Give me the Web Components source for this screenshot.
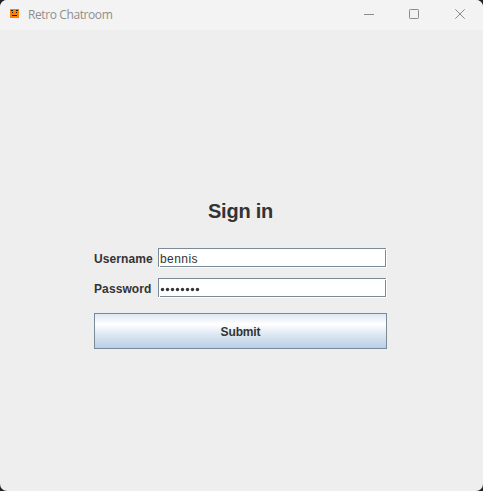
<!DOCTYPE html>
<html lang="en">
<head>
<meta charset="utf-8">
<title>Retro Chatroom</title>
<style>
html,body{margin:0;height:100%;overflow:hidden;background:#202226}
body{font-family:"Liberation Sans",Arial,sans-serif}
</style>
</head>
<body>
<app-window caption="Retro Chatroom">
  <sign-in-form></sign-in-form>
</app-window>
<script>
const define = (name, html) => customElements.define(name, class extends HTMLElement {
  constructor() {
    super();
    this.attachShadow({mode: 'open'}).innerHTML =
      html.replace(/\{(\w+)\}/g, (_, key) => this.getAttribute(key) || '');
  }
});

define('app-icon', `<style>:host{display:block;width:9px;height:9px}svg{display:block}</style>
<svg width="9" height="9" shape-rendering="crispEdges"><path fill="#ff8000" d="M0 0h9v9H0z"/>
<path fill="#1c1712" d="M1 1h2v1H1zM6 1h2v1H6zM2 3h1v1H2zM6 3h1v1H6zM2 6h5v1H2z"/></svg>`);

define('window-controls', `<style>
:host{display:flex;height:29px}
span{width:46px;display:flex}
svg{display:block;width:46px;height:29px;fill:none;stroke:#8b8b8b;stroke-width:1}
</style>
<span><svg><path d="M19 14.5h10"/></svg></span>
<span><svg><rect x="18.5" y="9.5" width="9" height="9" rx=".8"/></svg></span>
<span><svg><path d="M18.3 9.3l9.4 9.4M27.7 9.3l-9.4 9.4"/></svg></span>`);

define('title-bar', `<style>
:host{display:flex;height:30px;background:#f3f3f3;color:#8f8f8f;font:12px/30px "Open Sans","Noto Sans",sans-serif}
app-icon{margin:9px 9px 0 10px}
.caption{flex:1;white-space:nowrap;letter-spacing:-.4px}
</style><app-icon></app-icon><span class="caption"><slot></slot></span><window-controls></window-controls>`);

define('app-window', `<style>
:host{display:flex;flex-direction:column;width:483px;height:491px;background:#eee;border-radius:7px;overflow:hidden}
main{flex:1;display:flex;flex-direction:column;align-items:flex-start}
</style><title-bar>{caption}</title-bar><main><slot></slot></main>`);

define('text-field', `<style>
:host{display:grid;grid-template-columns:64px 229px;height:20px;align-items:start;color:#333}
b{font-size:12px;line-height:20px;padding-top:1px;letter-spacing:.1px}
.box{box-sizing:border-box;height:20px;border:solid #fff;border-width:0 1px 1px 0;
background:linear-gradient(#eee,#eee) 100% 0/1px 1px no-repeat border-box,#fff}
.edge{position:relative;box-sizing:border-box;height:19px;border:1px solid #7a8a99;padding-left:1px;font-size:12px;line-height:19px;letter-spacing:.45px;color:#333;display:flex}
.edge::before,.edge::after{content:"";position:absolute;width:1px;height:1px;background:#fff}
.edge::before{left:0;bottom:-1px}
.edge::after{right:-1px;top:0}
.value{display:block;padding-top:1px;white-space:nowrap}
</style><b>{label}</b><div class="box"><div class="edge"><span class="value"><slot></slot></span></div></div>`);

define('password-dots', `<style>:host{display:block}svg{display:block}</style>
<svg width="44" height="16" fill="#333">${Array.from({length: 8}, (_, i) => `<circle cx="${2.5 + i * 5}" cy="9.5" r="1.7"/>`).join('')}</svg>`);

define('submit-button', `<style>
:host{display:block}
button{display:block;box-sizing:border-box;width:293px;height:36px;padding:2px 0 0;margin:0;border:1px solid #7a8a99;border-radius:0;
background:linear-gradient(#dde8f3 0%,#fff 30%,#dde8f3 60%,#b8cfe5 100%);font:bold 12px/32px "Liberation Sans",Arial,sans-serif;letter-spacing:-.15px;color:#333}
</style><button><slot></slot></button>`);

define('sign-in-form', `<style>
:host{display:flex;flex-direction:column;width:293px;margin:168px 0 0 94px}
h1{margin:0 0 24px;height:26px;text-align:center;font:bold 20px/26px "Liberation Sans",Arial,sans-serif;letter-spacing:-.25px;color:#333}
text-field{margin-bottom:10px}
submit-button{margin-top:5px}
</style><h1>Sign in</h1>
<text-field label="Username">bennis</text-field>
<text-field label="Password"><password-dots></password-dots></text-field>
<submit-button>Submit</submit-button>`);
</script>
</body>
</html>
